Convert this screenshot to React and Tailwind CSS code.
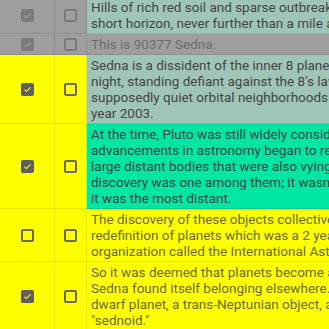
import React from "react";

const rows = [
  {
    cell: "bg-[#9e9e9e]",
    text: "bg-[#9fc5b8] text-[#454545]",
    dim: true,
    a: true,
    b: false,
    lines: [
      "Hills of rich red soil and sparse outbreaks of grass under a",
      "short horizon, never further than a mile away from the end.",
    ],
  },
  {
    cell: "bg-[#9e9e9e]",
    text: "bg-[#9e9e9e] text-[#6e6e6e]",
    dim: true,
    a: true,
    b: false,
    lines: ["This is 90377 Sedna."],
  },
  {
    cell: "bg-[#ffff00]",
    text: "bg-[#9fc5b8] text-[#454545]",
    a: true,
    b: false,
    lines: [
      "Sedna is a dissident of the inner 8 planets, a wanderer of the",
      "night, standing defiant against the 8's laws of motion in their",
      "supposedly quiet orbital neighborhoods until it was found in the",
      "year 2003.",
    ],
  },
  {
    cell: "bg-[#ffff00]",
    text: "bg-[#00e6a3] text-[#3e4a44]",
    a: true,
    b: false,
    lines: [
      "At the time, Pluto was still widely considered a planet, but",
      "advancements in astronomy began to reveal a great number of",
      "large distant bodies that were also vying for the title. This",
      "discovery was one among them; it wasn't the biggest, but",
      "it was the most distant.",
    ],
  },
  {
    cell: "bg-[#ffff00]",
    text: "bg-[#ffff00] text-[#6b6b3a]",
    a: false,
    b: false,
    lines: [
      "The discovery of these objects collectively forced a",
      "redefinition of planets which was a 2 year process by an",
      "organization called the International Astronomical Union.",
    ],
  },
  {
    cell: "bg-[#ffff00]",
    text: "bg-[#ffff00] text-[#6b6b3a]",
    a: true,
    b: false,
    lines: [
      "So it was deemed that planets become a class of their own, and",
      "Sedna found itself belonging elsewhere. It is now called a",
      "dwarf planet, a trans-Neptunian object, and most recently, a",
      "\"sednoid.\"",
    ],
  },
];

const Box = ({ checked, dim }) =>
  checked ? (
    <span
      className={`flex h-[13px] w-[13px] items-center justify-center rounded-[2px] ${
        dim ? "bg-[#7b7b7b]" : "bg-[#5f5f5f]"
      }`}
    >
      <svg width="9" height="9" viewBox="0 0 24 24" fill="none">
        <path
          d="M4 12.5l5 5L20 6.5"
          stroke={dim ? "#9e9e9e" : "#ffff00"}
          strokeWidth="3"
        />
      </svg>
    </span>
  ) : (
    <span
      className={`block h-[13px] w-[13px] rounded-[2px] border-2 ${
        dim ? "border-[#7b7b7b]" : "border-[#6a6a6a]"
      }`}
    />
  );

export default function App() {
  return (
    <div className="h-[329px] w-[329px] overflow-hidden bg-[#ffff00] font-['Roboto',sans-serif] text-[13.5px] leading-4">
      <div className="-mt-[3px] w-[420px]">
        {rows.map((r, i) => (
          <div key={i} className="flex">
            <div className={`flex w-[55px] shrink-0 items-center justify-center border-r border-b border-black/10 ${r.cell}`}>
              <Box checked={r.a} dim={r.dim} />
            </div>
            <div className={`flex w-[32px] shrink-0 items-center justify-center border-r border-b border-black/10 ${r.cell}`}>
              <Box checked={r.b} dim={r.dim} />
            </div>
            <div className={`flex-1 whitespace-nowrap border-b border-black/10 px-1 py-[2px] ${r.text}`}>
              {r.lines.map((l, j) => (
                <div key={j}>{l}</div>
              ))}
            </div>
          </div>
        ))}
      </div>
    </div>
  );
}
